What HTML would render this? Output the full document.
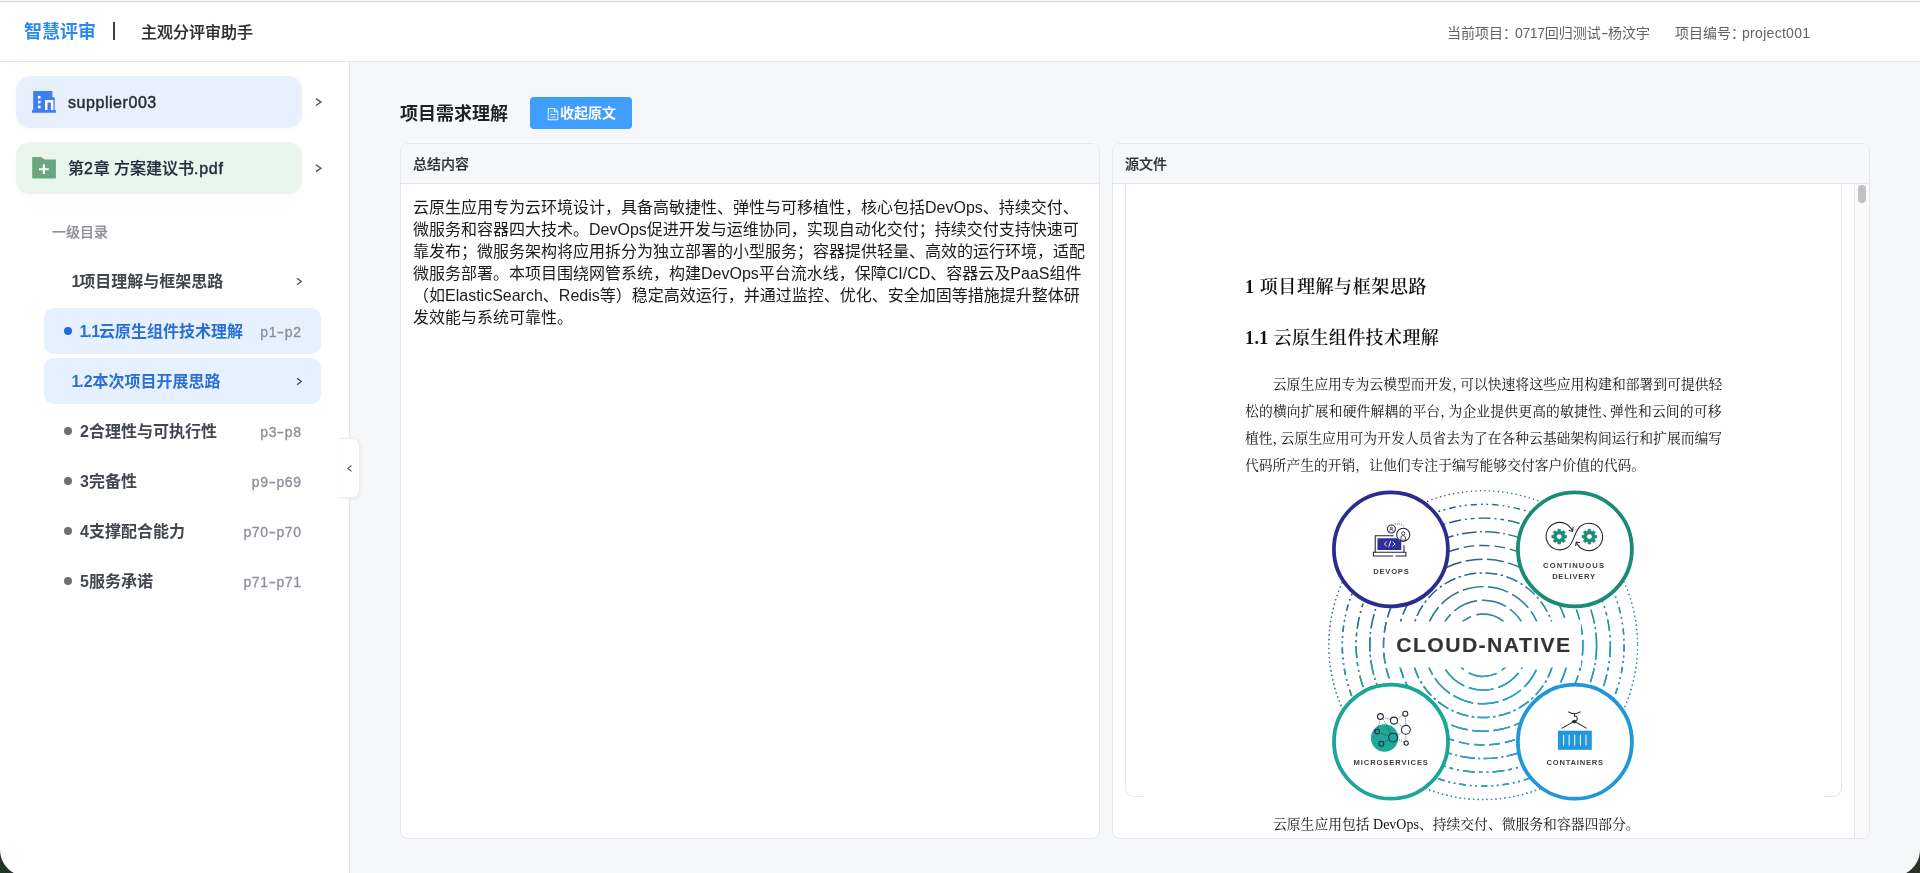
<!DOCTYPE html>
<html lang="zh-CN">
<head>
<meta charset="utf-8">
<title>主观分评审助手</title>
<style>
*{box-sizing:border-box;margin:0;padding:0}
html,body{width:1920px;height:873px;overflow:hidden}
body{position:relative;background:#f6f7f9;font-family:"Liberation Sans","Noto Sans CJK SC",sans-serif;color:#303133;-webkit-font-smoothing:antialiased}
#root{position:absolute;left:0;top:0;width:1920px;height:873px;will-change:transform}
.abs{position:absolute}
/* header */
#topline{left:0;top:0;width:1920px;height:3px;background:linear-gradient(#f6f6f6 0,#f6f6f6 1px,#dfdfdf 1px,#dfdfdf 2px,#f3f3f3 2px)}
#header{left:0;top:3px;width:1920px;height:59px;background:#fff;border-bottom:1px solid #e6e6e8}
#logo{left:24px;top:19px;height:26px;line-height:26px;font-size:18px;font-weight:700;color:#2b8af2;letter-spacing:0;white-space:nowrap}
#sep{left:113px;top:22px;width:1.5px;height:18px;background:#3a3a3a}
#sub{left:141px;top:20px;height:26px;line-height:26px;font-size:16px;font-weight:500;color:#2b2d30;white-space:nowrap;-webkit-text-stroke:.2px #2b2d30}
#proj{left:1447px;top:20px;height:26px;line-height:26px;font-size:14px;color:#606266;white-space:nowrap}
#projno{left:1675px;top:20px;height:26px;line-height:26px;font-size:14px;color:#606266;white-space:nowrap}
/* sidebar */
#side{left:0;top:62px;width:350px;height:811px;background:#fff;border-right:1px solid #e6e7ea}
.pill{left:16px;width:286px;height:52px;border-radius:14px;box-shadow:0 2px 5px rgba(0,0,0,.022)}
.pill .t{position:absolute;left:52px;top:1px;height:52px;line-height:52px;font-size:16px;font-weight:500;color:#232d3b;white-space:nowrap;-webkit-text-stroke:.2px #232d3b}
.pill .t .l{letter-spacing:.7px;-webkit-text-stroke:.45px #232d3b}
.pill .t.lat{letter-spacing:.55px;-webkit-text-stroke:.45px #232d3b}
.chev{width:8px;height:10px}
.lvl{left:52px;top:222px;font-size:14px;line-height:20px;color:#8d8f94;font-weight:500;-webkit-text-stroke:.2px #8d8f94}
.item{left:44px;width:277px;height:46px;border-radius:10px}
.item .n{position:absolute;top:1px;height:46px;line-height:46px;font-size:16px;font-weight:700;color:#42474f;white-space:nowrap}
.item .p{position:absolute;right:19.400px;top:1px;height:46px;line-height:46px;font-size:14px;font-weight:500;color:#8a8f98;white-space:nowrap;letter-spacing:.6px;-webkit-text-stroke:.3px #8a8f98}
.item .n u{text-decoration:none;margin:0 -1.300px 0 -.400px}
.item .d{position:absolute;left:20px;top:19px;width:8px;height:8px;border-radius:50%;background:#6b7078}
.item.act{background:#e6f0ff}
.item.act .n{color:#2a6fd6}
.item.act .d{background:#2468e0}
/* main */
#h2{left:400px;top:101px;height:26px;line-height:26px;font-size:18px;font-weight:700;color:#1f2329;white-space:nowrap}
#btn{left:530px;top:97px;width:102px;height:32px;border-radius:4px;background:#409eff}
#btn span{position:absolute;left:30px;top:1px;height:32px;line-height:31px;font-size:14px;font-weight:700;color:#fff;white-space:nowrap}
.card{top:143px;height:696px;background:#fff;border:1px solid #e4e7ed;border-radius:8px;overflow:hidden}
.card .hd{position:absolute;left:0;top:0;right:0;height:40px;background:#f7f8fa;border-bottom:1px solid #e4e7ed}
.card .hd span{position:absolute;left:12px;top:0;height:40px;line-height:40px;font-size:14px;font-weight:500;color:#303133;-webkit-text-stroke:.2px #303133}
#sum{position:absolute;left:12px;top:53px;width:680px;font-size:16px;line-height:22px;color:#1b1b1b;text-align:left}

.hy{display:inline-block;font-weight:inherit;width:7.300px;text-align:center;transform:scaleX(1.6)}
.item .p b{display:inline-block;font-weight:inherit;width:7.8px;text-align:center;transform:scaleX(1.55)}
#handle{left:339px;top:438px;width:21px;height:60px;background:#fff;border:1px solid #ececec;border-left:none;border-radius:0 7px 7px 0;box-shadow:1px 1px 4px rgba(0,0,0,.06)}

.pt{font-family:"Liberation Serif","Noto Serif CJK SC",serif;color:#111;white-space:nowrap;font-weight:600}
.pt b{font-weight:700}
.pp{font-family:"Liberation Serif","Noto Serif CJK SC",serif;font-size:13.800px;line-height:27px;height:27px;color:#111;white-space:nowrap;text-align:justify;text-align-last:justify;overflow:hidden}
.pp i{font-style:normal;display:inline-block;width:8px;overflow:visible;white-space:nowrap}
.pp .lat{font-size:14px}
</style>
</head>
<body>
<div id="root">
<div id="topline" class="abs"></div>
<div id="header" class="abs"></div>
<div id="logo" class="abs">智慧评审</div>
<div id="sep" class="abs"></div>
<div id="sub" class="abs">主观分评审助手</div>
<div id="proj" class="abs">当前项目：<span style="margin-left:-2px;letter-spacing:-.35px">0717</span>回归测试<b class="hy">-</b>杨汶宇</div>
<div id="projno" class="abs">项目编号：<span style="margin-left:-3px;letter-spacing:.3px">project001</span></div>

<div id="side" class="abs"></div>

<div class="abs pill" style="top:76px;background:#e8f0fd">
  <svg class="abs" style="left:16px;top:14px" width="24" height="24" viewBox="0 0 24 24">
    <path fill="#3c7ef3" d="M1.2 1.1h18.6a.6.6 0 0 1 .6.6v5.6h1.8a.5.5 0 0 1 .5.5v12.3h1.2v2.6H0v-2.6h1.2z"/>
    <rect x="5.9" y="5.9" width="2.7" height="2.7" fill="#fff"/><rect x="5.9" y="10.7" width="2.7" height="2.7" fill="#fff"/><rect x="5.9" y="15.6" width="2.7" height="2.7" fill="#fff"/>
    <path fill="#fff" d="M13 9.9h8.4v10.2h-2.5v-7.7h-3.4v7.7H13z"/>
  </svg>
  <span class="t lat">supplier003</span>
</div>
<svg class="abs" style="left:314px;top:97px" width="10" height="12" viewBox="0 0 10 12"><path d="M2 1.700 6.900 5.100 2 8.500" fill="none" stroke="#575c63" stroke-width="1.450"/></svg>
<div class="abs pill" style="top:142px;background:#e8f6ee">
  <svg class="abs" style="left:16px;top:14px" width="24" height="24" viewBox="0 0 24 24">
    <path fill="#6aa67f" d="M.2 1.6a.6.6 0 0 1 .6-.6h8.3l3.6 2.6h10.6a.6.6 0 0 1 .6.6v17.7a.6.6 0 0 1-.6.6H.8a.6.6 0 0 1-.6-.6z"/>
    <path d="M11.9 8.3v9.8M7 13.2h9.8" stroke="#fff" stroke-width="2.1" fill="none"/>
  </svg>
  <span class="t">第<span class="l">2</span>章 方案建议书<span class="l">.pdf</span></span>
</div>
<svg class="abs" style="left:314px;top:163px" width="10" height="12" viewBox="0 0 10 12"><path d="M2 1.800 6.900 5.200 2 8.600" fill="none" stroke="#575c63" stroke-width="1.450"/></svg>
<div class="abs lvl">一级目录</div>
<div class="abs item" style="top:258px"><span class="n" style="left:28px"><u>1</u>项目理解与框架思路</span>
  <svg class="abs" style="left:252px;top:19px" width="7" height="9" viewBox="0 0 7 9"><path d="M1 1.2 5.3 4.5 1 7.8" fill="none" stroke="#50555c" stroke-width="1.4"/></svg></div>
<div class="abs item act" style="top:308px"><i class="d"></i><span class="n" style="left:36px"><u>1</u>.<u>1</u>云原生组件技术理解</span><span class="p">p1<b>-</b>p2</span></div>
<div class="abs item act" style="top:358px"><span class="n" style="left:28px"><u>1</u>.2本次项目开展思路</span>
  <svg class="abs" style="left:252px;top:19px" width="7" height="9" viewBox="0 0 7 9"><path d="M1 1.2 5.3 4.5 1 7.8" fill="none" stroke="#50555c" stroke-width="1.4"/></svg></div>
<div class="abs item" style="top:408px"><i class="d"></i><span class="n" style="left:36px">2合理性与可执行性</span><span class="p">p3<b>-</b>p8</span></div>
<div class="abs item" style="top:458px"><i class="d"></i><span class="n" style="left:36px">3完备性</span><span class="p">p9<b>-</b>p69</span></div>
<div class="abs item" style="top:508px"><i class="d"></i><span class="n" style="left:36px">4支撑配合能力</span><span class="p">p70<b>-</b>p70</span></div>
<div class="abs item" style="top:558px"><i class="d"></i><span class="n" style="left:36px">5服务承诺</span><span class="p">p71<b>-</b>p71</span></div>
<div id="handle" class="abs"><svg class="abs" style="left:7px;top:24.500px" width="7" height="9" viewBox="0 0 7 9"><path d="M5.500 1.500 1.800 4.400 5.500 7.300" fill="none" stroke="#5c6066" stroke-width="1.200"/></svg></div>


<div id="h2" class="abs">项目需求理解</div>
<div id="btn" class="abs"><svg class="abs" style="left:16px;top:9.500px" width="14" height="14" viewBox="0 0 1024 1024"><path fill="#fff" d="M832 384H576V128H192v768h640zm-26.496-64L640 154.496V320zM160 64h480l256 256v608a32 32 0 0 1-32 32H160a32 32 0 0 1-32-32V96a32 32 0 0 1 32-32m160 448h384v64H320zm0-192h160v64H320zm0 384h384v64H320z"/></svg><span>收起原文</span></div>

<div id="card1" class="abs card" style="left:400px;width:700px">
  <div class="hd"><span>总结内容</span></div>
  <div id="sum">云原生应用专为云环境设计，具备高敏捷性、弹性与可移植性，核心包括DevOps、持续交付、微服务和容器四大技术。DevOps促进开发与运维协同，实现自动化交付；持续交付支持快速可靠发布；微服务架构将应用拆分为独立部署的小型服务；容器提供轻量、高效的运行环境，适配微服务部署。本项目围绕网管系统，构建DevOps平台流水线，保障CI/CD、容器云及PaaS组件（如ElasticSearch、Redis等）稳定高效运行，并通过监控、优化、安全加固等措施提升整体研发效能与系统可靠性。</div>
</div>

<div id="card2" class="abs card" style="left:1112px;width:758px">
  <div class="hd"><span>源文件</span></div>
  
  <div class="abs" id="pg" style="left:-1113px;top:-144px;width:1920px;height:873px">
    <div class="abs" style="left:1854px;top:184px;width:16px;height:656px;background:#fafafa;border-left:1px solid #e8e8e8"></div>
    <div class="abs" style="left:1858px;top:185px;width:8px;height:18px;border-radius:4px;background:#c1c1c1"></div>
    <div class="abs" style="left:1125px;top:184px;width:717px;height:613px;border:1px solid #e4e7ed;border-top:none;border-radius:0 0 9px 9px"></div>
    <div class="abs" style="left:1143px;top:184px;width:681px;height:656px;background:#fff"></div>
    <div class="abs pt" style="left:1245px;top:273px;font-size:18px;line-height:28px;letter-spacing:.6px"><b>1</b>&nbsp;项目理解与框架思路</div>
    <div class="abs pt" style="left:1245px;top:323.500px;font-size:18px;line-height:28px;letter-spacing:.4px"><b>1.1</b>&nbsp;云原生组件技术理解</div>
    <div class="abs pp" style="left:1245px;top:371px;width:476.5px;padding-left:27.800px">云原生应用专为云模型而开发<i>，</i>可以快速将这些应用构建和部署到可提供轻</div>
    <div class="abs pp" style="left:1245px;top:398px;width:476.5px">松的横向扩展和硬件解耦的平台<i>，</i>为企业提供更高的敏捷性<i>、</i>弹性和云间的可移</div>
    <div class="abs pp" style="left:1245px;top:425px;width:476.5px">植性<i>，</i>云原生应用可为开发人员省去为了在各种云基础架构间运行和扩展而编写</div>
    <div class="abs pp" style="left:1245px;top:452px;width:400px">代码所产生的开销，让他们专注于编写能够交付客户价值的代码。</div>
    <div class="abs pp" style="left:1273px;top:811px;width:366px">云原生应用包括 <span class="lat">DevOps</span>、持续交付、微服务和容器四部分。</div>
    <!--DIAG-START-->
    <svg class="abs" style="left:1320px;top:480px" width="330" height="330" viewBox="1320 480 330 330">
      <defs>
        <linearGradient id="gt" gradientUnits="userSpaceOnUse" x1="1400" y1="0" x2="1570" y2="0">
          <stop offset="0" stop-color="#2b2f92"/><stop offset=".5" stop-color="#2b6c86"/><stop offset="1" stop-color="#1a8a74"/>
        </linearGradient>
        <linearGradient id="gb" gradientUnits="userSpaceOnUse" x1="1400" y1="0" x2="1570" y2="0">
          <stop offset="0" stop-color="#1cab9e"/><stop offset=".5" stop-color="#26a9c6"/><stop offset="1" stop-color="#2297d9"/>
        </linearGradient>
        <linearGradient id="mg" gradientUnits="userSpaceOnUse" x1="0" y1="565" x2="0" y2="665">
          <stop offset="0" stop-color="#000"/><stop offset="1" stop-color="#fff"/>
        </linearGradient>
        <mask id="mk" maskUnits="userSpaceOnUse" x="1320" y="480" width="330" height="330"><rect x="1320" y="480" width="330" height="330" fill="url(#mg)"/></mask>
      </defs>
      <g fill="none" stroke="url(#gt)" stroke-width="1.45">
        <circle cx="1483.2" cy="645.2" r="154.4" stroke-dasharray="0.1 4.4" stroke-linecap="round"/>
        <circle cx="1483.2" cy="645.2" r="140.9" stroke-dasharray="6.5 4 1.8 3.6 1.8 4"/>
        <circle cx="1483.2" cy="645.2" r="127.1" stroke-dasharray="12 4 2 4 3.7 4"/>
        <circle cx="1483.2" cy="645.2" r="113.4" stroke-dasharray="14.5 3.5 1.8 3.5"/>
        <circle cx="1483.2" cy="645.2" r="99.7" stroke-dasharray="10.5 5"/>
        <circle cx="1483.2" cy="645.2" r="86" stroke-dasharray="17 4.5"/>
        <circle cx="1483.2" cy="645.2" r="72.3" stroke-dasharray="12 3.5 2.4 3.5"/>
        <circle cx="1483.2" cy="645.2" r="58.6" stroke-dasharray="21 4.5"/>
        <circle cx="1483.2" cy="645.2" r="44.9" stroke-dasharray="25 5"/>
        <circle cx="1483.2" cy="645.2" r="31.2" stroke-dasharray="29 6"/>
      </g>
      <g fill="none" stroke="url(#gb)" stroke-width="1.45" mask="url(#mk)">
        <circle cx="1483.2" cy="645.2" r="154.4" stroke-dasharray="0.1 4.4" stroke-linecap="round"/>
        <circle cx="1483.2" cy="645.2" r="140.9" stroke-dasharray="6.5 4 1.8 3.6 1.8 4"/>
        <circle cx="1483.2" cy="645.2" r="127.1" stroke-dasharray="12 4 2 4 3.7 4"/>
        <circle cx="1483.2" cy="645.2" r="113.4" stroke-dasharray="14.5 3.5 1.8 3.5"/>
        <circle cx="1483.2" cy="645.2" r="99.7" stroke-dasharray="10.5 5"/>
        <circle cx="1483.2" cy="645.2" r="86" stroke-dasharray="17 4.5"/>
        <circle cx="1483.2" cy="645.2" r="72.3" stroke-dasharray="12 3.5 2.4 3.5"/>
        <circle cx="1483.2" cy="645.2" r="58.6" stroke-dasharray="21 4.5"/>
        <circle cx="1483.2" cy="645.2" r="44.9" stroke-dasharray="25 5"/>
        <circle cx="1483.2" cy="645.2" r="31.2" stroke-dasharray="29 6"/>
      </g>
      <rect x="1388" y="621.5" width="193" height="46" fill="#fff"/>
      <circle cx="1390.9" cy="549.3" r="57" fill="#fff" stroke="#2b2d8e" stroke-width="3.8"/>
      <circle cx="1574.9" cy="549.3" r="57" fill="#fff" stroke="#1b8a76" stroke-width="3.8"/>
      <circle cx="1391" cy="741.7" r="57" fill="#fff" stroke="#1ba69a" stroke-width="3.8"/>
      <circle cx="1574.9" cy="741.7" r="57" fill="#fff" stroke="#2197d9" stroke-width="3.8"/>
      <g font-family="Liberation Sans, sans-serif" font-weight="700" fill="#333" text-anchor="middle">
        <text x="1483.9" y="652.4" font-size="20" letter-spacing="1.33" stroke="#333" stroke-width=".15" transform="translate(1483.2 0) scale(1.06 1) translate(-1483.2 0)">CLOUD-NATIVE</text>
        <g font-size="7.6" letter-spacing=".75" fill="#3c3c3c">
          <text x="1391.4" y="573.7">DEVOPS</text>
          <text x="1574.1" y="568.4" letter-spacing="1.1">CONTINUOUS</text>
          <text x="1574" y="579.4">DELIVERY</text>
          <text x="1391.2" y="765" letter-spacing=".9">MICROSERVICES</text>
          <text x="1575.2" y="765">CONTAINERS</text>
        </g>
      </g>

      <!-- devops icon -->
      <g fill="none" stroke="#1f2733" stroke-width="1.05">
        <path d="M1375.2 552.2V535.7H1393.5M1404 545.3V552.2"/>
        <path d="M1393 555.9H1373.4V552.2H1405.9V555.9H1395.5"/>
        <path d="M1395 524.3a9 9 0 0 1 9.5 2.6" stroke-dasharray=".9 1.1" stroke-width=".8"/>
        <circle cx="1391.4" cy="529" r="4" fill="#fff"/>
        <circle cx="1391.4" cy="528.2" r="1" stroke-width=".7"/>
        <path d="M1389.7 531.8v-.9a1.7 1.7 0 0 1 3.4 0v.9" stroke-width=".7"/>
        <circle cx="1403.2" cy="534.8" r="6.6" fill="#fff"/>
        <circle cx="1403.2" cy="533.4" r="1.6" stroke-width=".8"/>
        <path d="M1400.8 540.2v-2.2a2.4 2.4 0 0 1 4.8 0v2.2z" stroke-width=".8"/>
      </g>
      <path d="M1377.5 538.2H1397.3a6.8 6.8 0 0 0 4 3.1V549.9H1377.5z" fill="#2e2f9a"/>
      <path d="M1386.8 541.6l-2.5 2.4 2.5 2.4M1392.6 541.6l2.5 2.4-2.5 2.4M1390.7 540.8l-2 6.4" fill="none" stroke="#fff" stroke-width=".9"/>
      <!-- continuous delivery icon -->
      <g fill="none" stroke="#1f2733" stroke-width="1.05">
        <path d="M1572.6 531.2A13.7 13.7 0 1 0 1567.5 547.5C1574.3 543.5 1574.3 529.7 1581.1 525.7A13.7 13.7 0 1 1 1576.2 542"/>
        <path d="M1568.7 530.5l3.9 .8 .5-4.2" stroke-width="1"/>
        <path d="M1580.1 542.7l-3.9-.7-.5 4.2" stroke-width="1"/>
      </g>
      <path d="M1557.79 529.23 L1560.61 529.23 L1560.55 531.17 L1562.09 531.8 L1563.42 530.4 L1565.4 532.38 L1564 533.71 L1564.63 535.25 L1566.57 535.19 L1566.57 538.01 L1564.63 537.95 L1564 539.49 L1565.4 540.82 L1563.42 542.8 L1562.09 541.4 L1560.55 542.03 L1560.61 543.97 L1557.79 543.97 L1557.85 542.03 L1556.31 541.4 L1554.98 542.8 L1553 540.82 L1554.4 539.49 L1553.77 537.95 L1551.83 538.01 L1551.83 535.19 L1553.77 535.25 L1554.4 533.71 L1553 532.38 L1554.98 530.4 L1556.31 531.8 L1557.85 531.17Z M1556.5 536.6a2.7 2.7 0 1 0 5.4 0a2.7 2.7 0 1 0 -5.4 0Z" fill="#1b8a76" fill-rule="evenodd" stroke="#1b8a76" stroke-width=".6" stroke-linejoin="round"/>
      <path d="M1587.99 529.23 L1590.81 529.23 L1590.75 531.17 L1592.29 531.8 L1593.62 530.4 L1595.6 532.38 L1594.2 533.71 L1594.83 535.25 L1596.77 535.19 L1596.77 538.01 L1594.83 537.95 L1594.2 539.49 L1595.6 540.82 L1593.62 542.8 L1592.29 541.4 L1590.75 542.03 L1590.81 543.97 L1587.99 543.97 L1588.05 542.03 L1586.51 541.4 L1585.18 542.8 L1583.2 540.82 L1584.6 539.49 L1583.97 537.95 L1582.03 538.01 L1582.03 535.19 L1583.97 535.25 L1584.6 533.71 L1583.2 532.38 L1585.18 530.4 L1586.51 531.8 L1588.05 531.17Z M1586.7 536.6a2.7 2.7 0 1 0 5.4 0a2.7 2.7 0 1 0 -5.4 0Z" fill="#1b8a76" fill-rule="evenodd" stroke="#1b8a76" stroke-width=".6" stroke-linejoin="round"/>
      <!-- microservices icon -->
      <circle cx="1384.6" cy="738" r="13.7" fill="#1fa899"/>
      <g fill="none" stroke="#1f2733" stroke-width=".8" stroke-dasharray=".9 1.2">
        <path d="M1383.3 717.4L1390.6 719.6M1397.3 719.3L1403 715M1405.4 716.3L1405.8 725.4M1397 722.4L1402.3 727M1402 731.8L1397 735.6M1405.9 734.2L1406.1 740.9M1379.4 732.6L1389 736.2M1383.5 742.5L1389.3 739.8M1380.1 719.4L1377.6 729.2M1397.3 739L1404.1 742.4M1383 719l8 15"/>
      </g>
      <g fill="none" stroke="#1f2733" stroke-width="1.05">
        <circle cx="1380.4" cy="716.5" r="2.9" fill="#fff"/>
        <circle cx="1394" cy="720.6" r="3.5" fill="#fff"/>
        <circle cx="1405.3" cy="713.7" r="2.5" fill="#fff"/>
        <circle cx="1405.9" cy="729.8" r="4.4" fill="#fff"/>
        <circle cx="1393.1" cy="737.6" r="4.4"/>
        <circle cx="1377.2" cy="731.6" r="2.3"/>
        <circle cx="1381.3" cy="743.8" r="2.5"/>
        <circle cx="1406.2" cy="743.1" r="2.1" fill="#fff"/>
      </g>
      <!-- containers icon -->
      <rect x="1557.9" y="730.7" width="33.9" height="19.1" fill="#2297d9"/>
      <path d="M1563.6 734.8v10.6M1569.1 734.8v10.6M1574.7 734.8v10.6M1580.4 734.8v10.6M1586 734.8v10.6" stroke="#e8f4fc" stroke-width="1.1" fill="none"/>
      <g fill="none" stroke="#1f2733" stroke-width="1.05">
        <path d="M1561.6 728.4L1574.4 721.3L1586.8 728.4"/>
        <path d="M1568.4 711.8Q1574.4 715.8 1580.4 711.8"/>
        <path d="M1574.4 713.8V716.3H1576.3a2.8 2.8 0 1 1-4.3 4.5"/>
        <circle cx="1574.4" cy="721.6" r="1.3"/>
      </g>
    </svg>
    <!--DIAG-END-->
  </div>

</div>
<svg class="abs" style="left:0;top:843px" width="30" height="30" viewBox="0 843 30 30"><path d="M0 845.5V849.800A26.400 26.400 0 0 0 13.800 873H0z" fill="#22362a"/></svg>
<svg class="abs" style="left:1890px;top:843px" width="30" height="30" viewBox="1890 843 30 30"><path d="M1920 845.5V849.800A26.400 26.400 0 0 1 1906.200 873H1920z" fill="#2b322b"/></svg>
</div>
</body>
</html>
